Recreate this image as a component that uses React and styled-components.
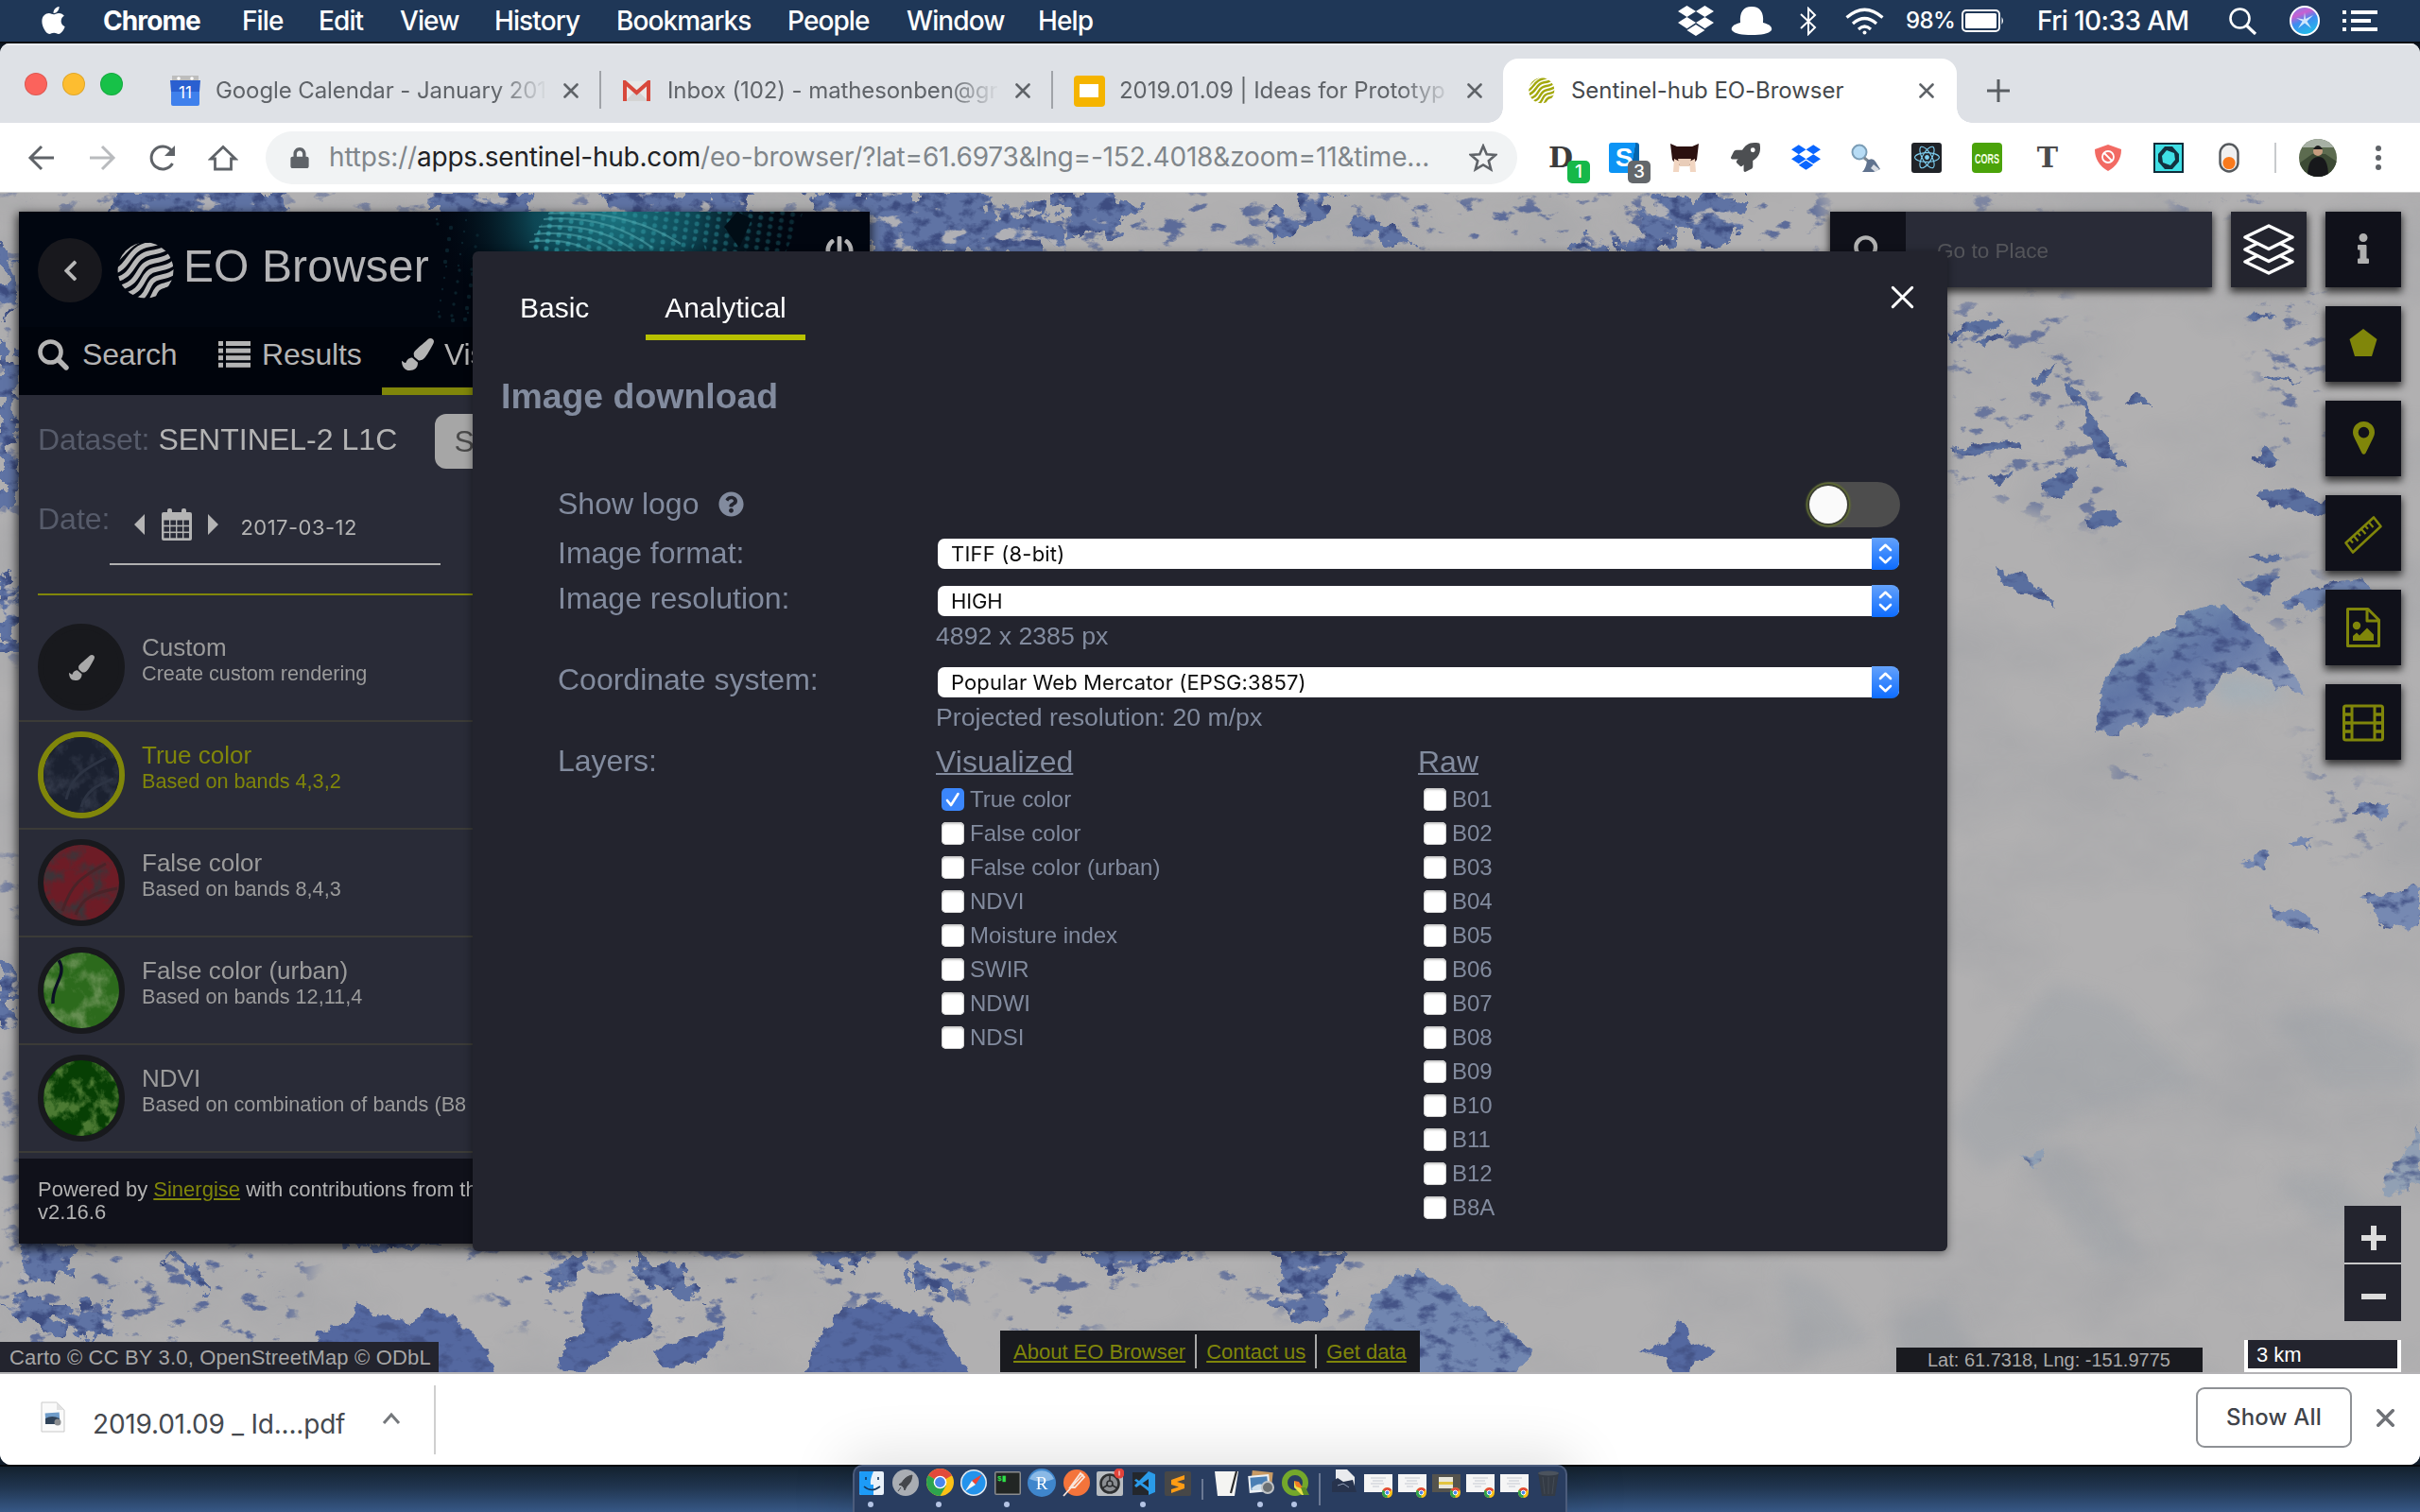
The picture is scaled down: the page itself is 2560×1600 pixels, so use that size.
import React from 'react';
import styled, { createGlobalStyle, css } from 'styled-components';
import {
  FaApple, FaDropbox, FaPaintBrush, FaQuestionCircle,
  FaInfo, FaRocket, FaLock, FaPowerOff, FaChevronLeft, FaReact,
} from 'react-icons/fa';

const ui = `Inter, Roboto, sans-serif`;
const arial = `"Liberation Sans", Arial, sans-serif`;
const olive = '#80860a';

const Global = createGlobalStyle`
  *, *::before, *::after { box-sizing: border-box; }
  html, body { margin: 0; padding: 0; }
  body { width: 2560px; height: 1600px; overflow: hidden; background: #1f3757; }
  svg { display: block; flex: none; }
  filter { color-interpolation-filters: sRGB; }
`;

const Desktop = styled.div`
  width: 2560px; height: 1600px; display: flex; flex-direction: column;
  font-family: ${ui}; overflow: hidden;
`;

/* ---------- menu bar ---------- */
const MenuBar = styled.header`
  height: 46px; flex: none; display: flex; align-items: center; padding: 0 45px 0 40px;
  background: #1f3757; border-bottom: 2px solid #060b12; color: #fff;
  font-size: 28px; line-height: 44px;
`;
const MenuItem = styled.span`
  width: ${p => p.$w}px; flex: none; white-space: nowrap;
  letter-spacing: ${p => p.$ls ?? -0.9}px; font-weight: ${p => (p.$bold ? 700 : 500)};
`;
const AppleBox = styled.div`width: 69px; flex: none; padding-bottom: 2px;`;
const Status = styled.div`margin-left: auto; display: flex; align-items: center;`;
const Slot = styled.div`width: ${p => p.$w}px; flex: none; display: flex; align-items: center;`;
const Percent = styled.span`
  width: 59px; font-size: 24px; letter-spacing: -0.6px; font-weight: 500; white-space: nowrap;
`;
const Clock = styled.span`width: 203px; letter-spacing: -0.6px; font-weight: 500; white-space: nowrap;`;

/* ---------- browser window ---------- */
const Window = styled.main`
  height: 1504px; flex: none; display: flex; flex-direction: column; overflow: hidden;
  border-radius: 10px 10px 12px 12px; background: #fff;
`;
const WindowBack = styled.div`
  flex: none; background: linear-gradient(#0b1420 0 60px, #16273c 1400px, #101c29);
`;
const TabStrip = styled.nav`
  height: 84px; flex: none; background: #dee1e6; border-top: 2px solid #eceef1;
  display: flex; align-items: flex-end; padding-left: 26px;
`;
const Lights = styled.div`display: flex; gap: 16px; width: 138px; height: 82px; align-items: center;`;
const Light = styled.i`width: 24px; height: 24px; border-radius: 50%; background: ${p => p.$c}; box-shadow: inset 0 0 0 1px rgba(0,0,0,.12);`;
const Tab = styled.div`
  position: relative; height: 68px; width: ${p => p.$w}px; flex: none; display: flex; align-items: center;
  padding: 0 ${p => p.$pr ?? 23}px 0 ${p => p.$pl ?? 23}px; font-size: 24px; color: #5f6368;
  ${p => p.$line && css`&::after { content: ''; position: absolute; right: 0; top: 13px; width: 2px; height: 40px; background: #a0a3a8; }`}
  ${p => p.$active && css`
    background: #fff; border-radius: 16px 16px 0 0; color: #45494d;
    &::before, &::after { content: ''; position: absolute; bottom: 0; width: 16px; height: 16px; }
    &::before { left: -16px; background: radial-gradient(circle at 0 0, transparent 15.5px, #fff 16px); }
    &::after { right: -16px; background: radial-gradient(circle at 100% 0, transparent 15.5px, #fff 16px); }
  `}
`;
const Favicon = styled.span`width: ${p => p.$w ?? 48}px; flex: none; display: flex;`;
const TabTitle = styled.span`
  width: ${p => p.$w}px; margin-right: auto; flex: none; white-space: nowrap; letter-spacing: ${p => p.$ls ?? -0.1}px;
  line-height: 40px;
  ${p => p.$fade && css`-webkit-mask-image: linear-gradient(90deg, #000 84%, transparent);`}
`;
const Toolbar = styled.div`
  height: 74px; flex: none; background: #fff; border-bottom: 1px solid #d0d0d0; display: flex; align-items: center; padding: 0 33px 0 28px;
`;
const NavIcons = styled.div`display: flex; gap: 32px; width: 253px; color: #5f6368;`;
const Omnibox = styled.div`
  width: 1324px; height: 56px; flex: none; border-radius: 28px; background: #f1f3f4; display: flex; align-items: center;
  padding: 0 20px 0 25px; color: #5f6368;
`;
const Url = styled.span`
  margin-left: 20px; width: 1206px; flex: none; font-size: 28px; letter-spacing: -0.17px; white-space: nowrap; color: #80868b; padding-bottom: 1px;
  b { font-weight: 400; color: #202124; letter-spacing: -0.22px; }
`;
const Extensions = styled.div`display: flex; margin-left: 17px;`;
const Ext = styled.div`position: relative; width: 64px; height: 40px; display: flex; align-items: center; justify-content: center;`;
const ExtBadge = styled.span`
  position: absolute; left: 36px; top: 23px; width: 24px; height: 24px; border-radius: 5px; background: ${p => p.$c}; color: #fff;
  font-size: 19px; line-height: 24px; text-align: center; font-weight: 500;
`;
const ExtTile = styled.span`
  width: 32px; height: 32px; border-radius: ${p => p.$r ?? 3}px; background: ${p => p.$bg ?? 'transparent'}; color: ${p => p.$fg ?? '#fff'};
  display: flex; align-items: center; justify-content: ${p => p.$align ?? 'center'}; font: 700 ${p => p.$fs ?? 28}px/32px ${p => p.$ff ?? arial};
`;
const ToolbarRule = styled.i`width: 2px; height: 32px; background: #c8cacd; margin: 0 24px 0 16px; align-self: center;`;
const Dots = styled.div`margin-left: 40px;`;

/* ---------- page ---------- */
const Page = styled.section`
  position: relative; height: 1250px; flex: none; overflow: hidden; background: #b0b0b2; font-family: ${arial};
`;
const MapCanvas = styled.svg`position: absolute; inset: 0;`;

const Panel = styled.aside`
  position: absolute; left: 20px; top: 20px; width: 900px; height: 1092px; background: #292b37; box-shadow: 0 4px 10px 2px rgba(0,0,0,.7);
  display: flex; flex-direction: column; color: #a9a9a9;
`;
const PanelHead = styled.div`
  position: relative; height: 122px; flex: none; background: #010610; display: flex; align-items: flex-start; padding: 28px 20px 0;
`;
const HeadArt = styled.svg`position: absolute; inset: 0;`;
const BackButton = styled.div`
  position: relative; width: 68px; height: 68px; border-radius: 50%; background: #18181d; color: #b9b9b9; display: flex; align-items: center; justify-content: center;
`;
const Brand = styled.div`
  position: relative; display: flex; margin: 4px 0 0 16px; gap: 10px; font-size: 48px; line-height: 52px; color: #b4b4b6; white-space: nowrap; letter-spacing: .1px;
`;
const Power = styled.div`position: relative; margin: -2px -3px 0 auto; color: #b4b4b6;`;
const PanelTabs = styled.div`height: 72px; flex: none; background: #00040c; display: flex; padding-left: 20px; font-size: 32px; color: #b4b4b4;`;
const PanelTab = styled.div`
  height: 72px; width: ${p => p.$w}px; flex: none; display: flex; align-items: center; padding: 0 0 6px ${p => p.$pl ?? 0}px; gap: ${p => p.$gap ?? 12}px;
  border-bottom: 8px solid ${p => (p.$active ? olive : 'transparent')}; white-space: nowrap; letter-spacing: -.15px;
`;
const DatasetRow = styled.div`
  margin: 20px 0 0 20px; height: 58px; flex: none; display: flex; font-size: 32px; line-height: 54px; letter-spacing: -0.1px; color: #565b6a; white-space: nowrap;
  strong { font-weight: 400; color: #b4b4b4; margin-left: 9px; width: 293px; letter-spacing: 0.03px; }
`;
const GrayButton = styled.div`
  width: 200px; height: 58px; border-radius: 12px; background: #a6a6a6; color: #4a4a4a; padding-left: 20px; font-size: 32px; line-height: 58px;
`;
const DateRow = styled.div`
  margin: 24px 0 30px 20px; height: 78px; flex: none; display: flex; font-size: 32px; line-height: 58px; color: #565b6a;
`;
const DateField = styled.div`
  width: 350px; height: 78px; border-bottom: 2px solid #b0b0b0; display: flex; align-items: center; padding: 0 0 6px 26px; color: #b4b4b4;
  font: 400 22px/30px ${ui};
`;
const DateText = styled.span`margin: 5px 0 0 20px; letter-spacing: 0.45px;`;
const LayerList = styled.ul`
  list-style: none; margin: 0; padding: 22px 0 0; height: 598px; flex: none; position: relative;
  &::before { content: ''; position: absolute; left: 20px; right: 20px; top: 0; height: 2px; background: ${olive}; }
`;
const LayerItem = styled.li`
  height: 114px; border-bottom: 2px solid #3b3b37; display: flex; padding: 10px 20px; color: ${p => (p.$on ? '#80860a' : '#9b9b9b')};
`;
const Thumb = styled.div`
  width: 92px; height: 92px; border-radius: 50%; flex: none; border: 6px solid ${p => (p.$on ? olive : '#18191d')}; background: #18191d;
  overflow: hidden; display: flex; align-items: center; justify-content: center; color: #a9a9a9;
`;
const LayerText = styled.div`
  margin: 9px 0 0 18px; white-space: nowrap; font-size: 26px; line-height: 32px;
  small { display: block; font-size: 21.67px; line-height: 24px; }
`;
const PanelFoot = styled.div`
  flex: 1; background: #10111a; color: #b2b2b2; padding: 21px 20px 0; font-size: 22px; line-height: 24px; white-space: nowrap;
  u { color: ${olive}; }
`;

const SearchBox = styled.div`
  position: absolute; left: 1936px; top: 20px; width: 404px; height: 80px; background: #292b37; display: flex; box-shadow: 0 4px 8px 1px rgba(0,0,0,.7);
  font-size: 22.6px; line-height: 84px; color: #54555a;
`;
const SearchIcon = styled.div`width: 80px; height: 80px; background: #10111a; color: #b2b2b2; padding: 25px 0 0 25px; margin-right: 33px;`;
const LayersButton = styled.div`
  position: absolute; left: 2360px; top: 20px; width: 80px; height: 80px; background: #23242e; box-shadow: 0 4px 8px 1px rgba(0,0,0,.7);
  display: flex; align-items: center; justify-content: center;
`;
const ToolColumn = styled.div`position: absolute; left: 2460px; top: 20px; display: flex; flex-direction: column; gap: 20px;`;
const Tool = styled.div`
  width: 80px; height: 80px; background: #10111a; box-shadow: 0 4px 8px 1px rgba(0,0,0,.7); color: ${p => p.$c ?? olive};
  display: flex; align-items: center; justify-content: center; padding: ${p => p.$pt ?? 0}px 0 ${p => p.$pb ?? 0}px;
`;
const ZoomColumn = styled.div`
  position: absolute; left: 2480px; top: 1072px; display: flex; flex-direction: column; gap: 2px; background: #c9c9c9;
`;
const ZoomButton = styled.div`width: 60px; height: 60px; background: #23242e; display: flex; align-items: center; justify-content: center; padding: 8px 0 0 2px;`;
const ScaleBar = styled.div`
  position: absolute; left: 2374px; top: 1214px; width: 166px; height: 34px; background: #23242e; border: 4px solid #fff; border-top: 0; color: #fff;
  font-size: 22px; line-height: 32px; padding-left: 9px;
`;
const Coords = styled.div`
  position: absolute; left: 2006px; top: 1222px; width: 324px; height: 26px; background: #191a1f; color: #a9a9a9; font-size: 20px; line-height: 26px; padding-left: 33px; white-space: nowrap;
`;
const Attribution = styled.div`
  position: absolute; left: 0; top: 1216px; width: 464px; height: 32px; background: #23242e; color: #a6a6a6; font-size: 22px; line-height: 33px; padding-left: 10px; white-space: nowrap;
  letter-spacing: .17px;
`;
const Links = styled.div`
  position: absolute; left: 1058px; top: 1204px; width: 444px; height: 44px; background: #191a1f; display: flex; align-items: center; padding-left: 14px; color: ${olive};
  font-size: 22px; line-height: 46px; white-space: nowrap;
  u { padding-top: 1px; }
`;
const LinkRule = styled.i`width: 2px; height: 36px; background: #a9a9a9; margin: 0 10px;`;
const PageEdge = styled.div`position: absolute; left: 0; right: 0; bottom: 0; height: 2px; background: #b4b3b6;`;

/* ---------- modal ---------- */
const Modal = styled.div`
  position: absolute; left: 500px; top: 62px; width: 1560px; height: 1058px; border-radius: 6px; background: #23242e; box-shadow: 0 2px 10px rgba(0,0,0,.45);
  padding: 30px 50px 0 30px; color: #828b9e;
`;
const ModalTabs = styled.div`display: flex; gap: 40px; height: 64px; color: #fff; font-size: 30px; line-height: 59px;`;
const ModalTab = styled.div`height: 64px; padding: 0 20px; border-bottom: 6px solid ${p => (p.$active ? '#b8c100' : 'transparent')};`;
const CloseBox = styled.div`margin: 6px -15px 0 auto;`;
const Title = styled.h3`margin: 37px 0 67px; font-size: 37.44px; line-height: 44px; font-weight: 700;`;
const Field = styled.div`
  display: grid; grid-template-columns: 400px 1fr; height: ${p => p.$h}px; padding-left: 60px; font-size: 32px;
`;
const Label = styled.div`line-height: ${p => p.$lh}px; display: flex; align-items: center; height: ${p => p.$lh}px; gap: 21px; white-space: nowrap;`;
const Control = styled.div`padding-top: 10px;`;
const Select = styled.div`
  margin: 0 1px 0 2px; height: 32px; border-radius: 7px; background: #fff; color: #0c0c0c; display: flex; justify-content: space-between; align-items: center; padding-left: 14px;
  font: 400 22px/32px ${ui}; letter-spacing: ${p => p.$ls ?? 0.1}px; white-space: nowrap;
`;
const Stepper = styled.div`
  width: 29px; height: 34px; border-radius: 0 8px 8px 0; background: linear-gradient(#64a2fb, #0d6cff); display: flex; align-items: center; justify-content: center;
`;
const Hint = styled.div`font-size: 26.67px; line-height: 42px;`;
const Toggle = styled.div`
  width: 99px; height: 48px; border-radius: 24px; background: #4d4d4d; margin: 2px 0 0 auto; padding: 4px 3px;
`;
const Knob = styled.div`width: 40px; height: 40px; border-radius: 50%; background: #fafafa; box-shadow: 0 0 0 2px #3c3f33, 0 0 2px 3.5px #63722f;`;
const Columns = styled.div`display: grid; grid-template-columns: 510px 1fr;`;
const ColumnTitle = styled.div`height: 46px; line-height: 49px; text-decoration: underline; text-decoration-thickness: 2px;`;
const CheckRow = styled.div`height: 36px; display: flex; align-items: center; gap: 6px; padding-left: 6px; font-size: 24px; line-height: 36px; white-space: nowrap;`;
const Box = styled.span`
  width: 24px; height: 24px; border-radius: 5px; display: flex; align-items: center; justify-content: center;
  background: ${p => (p.$on ? '#3b86fb' : '#fff')}; box-shadow: ${p => (p.$on ? 'none' : 'inset 0 2px 2px #c9c9c9, inset 0 0 0 1px #d5d5d5')};
`;

/* ---------- downloads ---------- */
const Downloads = styled.footer`height: 96px; flex: none; background: #fff; display: flex; align-items: flex-start; padding: 0 27px 0 43px; color: #45494f;`;
const FileIcon = styled.div`margin: 29px 29px 0 0;`;
const FileName = styled.span`margin-top: 33px; width: 306px; flex: none; font-size: 28px; line-height: 40px; letter-spacing: -0.2px; white-space: nowrap;`;
const ChevronBox = styled.div`width: 55px; margin-top: 40px;`;
const BarRule = styled.i`width: 2px; height: 73px; margin-top: 12px; background: #cfcfcf;`;
const ShowAll = styled.div`
  margin: 14px 26px 0 auto; width: 165px; height: 64px; border: 2px solid #8e9195; border-radius: 9px; text-align: center; font: 500 24px/60px ${ui}; letter-spacing: .2px; color: #3f434a;
`;
const CloseSmall = styled.div`margin-top: 37px;`;

/* ---------- dock ---------- */
const DockArea = styled.div`
  flex: 1; display: flex; justify-content: center; border-top: 2px solid #05090e;
  background: linear-gradient(#13212e, #20354f 40%, #3c6093);
`;
const Dock = styled.div`
  position: relative; z-index: 2; width: 756px; height: 56px; flex: none; margin-top: -2px; border-radius: 10px 10px 0 0; background: #293d60; border: 2px solid #4c5c7b; border-bottom: 0;
  box-shadow: 0 0 60px 10px rgba(0,0,0,.12); display: flex;
`;
const DockItem = styled.div`
  width: 36px; height: 50px; flex: none; display: flex; flex-direction: column; align-items: center; padding-top: 2px; position: relative;
  ${p => p.$run && css`&::after { content: ''; position: absolute; left: 14px; top: 37px; width: 6px; height: 6px; border-radius: 50%; background: #b4c4e4; }`}
`;
const DockRule = styled.i`width: 2px; height: ${p => p.$h}px; margin: ${p => p.$t}px 7px 0; flex: none; background: #6a7893;`;

/* ---------- drawings ---------- */
const Cross = ({ s = 16, w = 2.6, c = '#5f6368' }) => (
  <svg width={s} height={s} viewBox="0 0 16 16" stroke={c} strokeWidth={w} strokeLinecap="round"><path d="M1.5 1.5 14.5 14.5M14.5 1.5 1.5 14.5" /></svg>
);

const Magnifier = ({ s = 33 }) => (
  <svg width={s} height={s} viewBox="0 0 33 33" fill="none" stroke="currentColor" strokeWidth="4.6">
    <circle cx="13.5" cy="13.5" r="11" /><path d="M21.5 21.5 30 30" strokeWidth="5.4" strokeLinecap="round" />
  </svg>
);

const Globe = ({ s, c }) => (
  <svg width={s} height={s} viewBox="0 0 60 60">
    <defs><clipPath id={'g' + Math.round(s)}><circle cx="30" cy="30" r="29.5" /></clipPath></defs>
    <g clipPath={`url(#g${Math.round(s)})`}>
      <g fill="none" stroke={c} strokeWidth="5.2" transform="rotate(-8 30 30)">
        <path d="M-6 18C8 14 14 -2 36 -4" />
        <path d="M-6 27C14 26 14 4 38 3.5 48 3 52 2 60 -4" />
        <path d="M-6 36C20 35 16 13 38 12.5 52 12 56 10 64 4" />
        <path d="M-4 45C26 44 19 22 40 21.500 54 21 58 19 66 12" />
        <path d="M0 53.500C30 53 22 31 42 30.500 56 30 60 28 68 20" />
        <path d="M8 61C34 61 26 40 44 39.500 56 39 60 37 68 30" />
        <path d="M20 67C38 66 32 49 48 48.500 56 48 60 46 66 40" />
      </g>
    </g>
  </svg>
);

const Dropbox = ({ s, c }) => <FaDropbox size={s} color={c} />;

const MapArt = () => (
  <MapCanvas width="2560" height="1250" viewBox="0 204 2560 1250">
    <defs>
      <filter id="grain" x="0" y="0" width="100%" height="100%">
        <feTurbulence type="fractalNoise" baseFrequency="0.006 0.009" numOctaves="5" seed="8" />
        <feColorMatrix values="0 0 0 0 .6  0 0 0 0 .61  0 0 0 0 .63  0 0 0 2.2 -0.85" />
      </filter>
      <filter id="rough" x="-10%" y="-10%" width="120%" height="120%">
        <feTurbulence type="fractalNoise" baseFrequency="0.05" numOctaves="5" seed="3" result="n" />
        <feDisplacementMap in="SourceGraphic" in2="n" scale="44" xChannelSelector="R" yChannelSelector="G" result="d" />
        <feTurbulence type="fractalNoise" baseFrequency="0.06 0.08" numOctaves="5" seed="21" />
        <feColorMatrix values="0 0 0 0 .24  0 0 0 0 .3  0 0 0 0 .5  0 0 0 4 -1.9" />
        <feComposite in2="d" operator="in" result="dark" />
        <feTurbulence type="fractalNoise" baseFrequency="0.03 0.05" numOctaves="6" seed="40" />
        <feColorMatrix values="0 0 0 0 .69  0 0 0 0 .69  0 0 0 0 .71  0 12 0 0 -7.5" />
        <feComposite in2="d" operator="in" result="snow" />
        <feMerge><feMergeNode in="d" /><feMergeNode in="dark" /><feMergeNode in="snow" /></feMerge>
      </filter>
      <filter id="ridge" x="-10%" y="-10%" width="120%" height="120%">
        <feTurbulence type="fractalNoise" baseFrequency="0.07" numOctaves="4" seed="5" result="n" />
        <feDisplacementMap in="SourceGraphic" in2="n" scale="16" xChannelSelector="R" yChannelSelector="G" result="d" />
        <feTurbulence type="fractalNoise" baseFrequency="0.05 0.08" numOctaves="5" seed="29" />
        <feColorMatrix values="0 0 0 0 .27  0 0 0 0 .33  0 0 0 0 .53  0 0 0 4 -2" />
        <feComposite in2="d" operator="in" result="dark" />
        <feMerge><feMergeNode in="d" /><feMergeNode in="dark" /></feMerge>
      </filter>
      <filter id="speck" x="-10%" y="-10%" width="120%" height="120%">
        <feTurbulence type="fractalNoise" baseFrequency="0.035 0.06" numOctaves="6" seed="12" />
        <feColorMatrix values="0 0 0 0 .36  0 0 0 0 .42  0 0 0 0 .6  10 0 0 0 -6.2" result="t" />
        <feGaussianBlur in="SourceGraphic" stdDeviation="10" result="b" />
        <feComposite in="t" in2="b" operator="in" />
      </filter>
      <filter id="soft"><feGaussianBlur stdDeviation="9" /></filter>
      <linearGradient id="peak" gradientUnits="userSpaceOnUse" x1="2270" y1="650" x2="2340" y2="770">
        <stop offset="0" stopColor="#7892b3" /><stop offset=".45" stopColor="#6075a5" /><stop offset="1" stopColor="#8494b6" />
      </linearGradient>
    </defs>
    <rect y="204" width="2560" height="1250" fill="#b1b0b1" />
    <g fill="#a1a5aa" opacity=".6" filter="url(#soft)">
      <path d="M2060 1190 2170 1040 2240 1060 2330 1150 2200 1180 2100 1240zM2400 1075 2470 1065 2560 1110V1150L2460 1150zM2400 1245 2470 1240 2520 1290 2460 1300z" />
      <path d="M2130 1210 2190 1215 2270 1330 2220 1340zM2000 1400 2060 1370 2090 1440 2010 1450zM1880 1340 1930 1360 1980 1420 1900 1440z" />
      <path fill="#9db0bd" d="M2340 714 2400 720 2420 740 2350 745z" />
    </g>
    <rect y="204" width="2560" height="1250" filter="url(#grain)" opacity=".4" />
    <g fill="#000" filter="url(#speck)">
      <path d="M0 204H130V224H0zM300 204H920V224H300zM920 204H1340V266H920zM1360 204 1930 204V266H1500L1400 240z" />
      <path d="M0 204H20V700H0zM0 900H20V1320H0z" />
      <path d="M0 1316H330L300 1452H60L0 1410zM470 1316 640 1316 620 1400 540 1400zM640 1316H800V1420H700zM850 1316H1060L1020 1400 880 1380zM1090 1316 1220 1330 1160 1400 1100 1452 1060 1400zM1260 1316H1440V1400L1300 1370z" />
    </g>
    <g fill="#000" filter="url(#speck)" opacity=".85">
      <path d="M2060 320 2180 310 2220 400 2240 560 2150 540 2060 510zM2370 320 2460 300V480L2400 490 2400 420zM2390 590 2450 600V670L2380 650zM2070 204H2180V224H2070zM2300 204H2420V224H2300z" />
      <path d="M2240 780 2290 800 2270 850 2230 840zM2430 740 2470 820 2540 850V900L2460 900z" opacity=".7" />
    </g>
    <g fill="#5f73a4" filter="url(#rough)">
      <path d="M125 200H312L300 232 110 236zM450 200H565L550 240H470zM640 200H805L790 240H660zM855 200H930V240H870z" />
      <path d="M915 200H1025L1050 226 1110 214 1130 262 1080 270H920zM1120 200H1175L1210 222 1170 250 1130 246z" />
      <path d="M1335 235 1375 222 1390 204 1420 208 1380 240 1345 262zM1425 240 1440 226 1480 240 1500 262 1440 250zM1655 266 1680 246 1700 266zM1712 270 1735 235 1755 204 1850 204 1840 250 1810 270 1780 240 1750 270z" />
      <path d="M0 250 14 262 16 320 0 340zM0 350 18 380 16 530 0 540zM0 610 20 620 18 690 0 690zM0 1010 18 1030 16 1090 0 1090z" />
      <path d="M22 1312H80L72 1340 54 1360 30 1346zM0 1378 40 1372 60 1386 118 1380 120 1410 96 1420 70 1404 20 1398z" />
      <path d="M180 1326 210 1344 226 1366 200 1362zM670 1324 720 1340 740 1374 700 1368 670 1344zM570 1350 620 1324 612 1350 590 1366z" />
      <path d="M350 1312H470L440 1322 380 1320zM865 1316H935L920 1336 880 1340zM1140 1316H1262L1230 1340 1160 1336zM960 1340 1020 1350 1010 1370 960 1360z" />
      <path d="M1340 1316H1420L1410 1350 1402 1390 1370 1400 1340 1380 1356 1350z" />
    </g>
    <g filter="url(#ridge)">
      <path fill="#5a6f9f" d="M2060 356 2080 340 2100 338 2122 340 2104 350 2076 354 2060 362zM2090 362 2124 350 2100 368zM2180 400 2198 412 2214 440 2236 478 2246 492 2226 484 2206 462 2204 432 2184 412zM2150 402 2178 386 2160 406zM2160 512 2198 492 2190 520 2170 526zM2102 506 2130 498 2116 516zM2060 474 2130 466 2140 474 2084 480zM2246 424 2264 416 2276 428 2258 428z" />
      <path fill="#5a6f9f" d="M2110 600 2146 612 2178 644 2150 632 2120 618zM2204 550 2230 538 2244 552 2214 560zM2386 522 2430 518 2462 534V548L2400 532zM2382 486 2394 472 2412 488 2396 492zM2378 590 2410 586 2420 592 2388 596zM2370 614 2408 610 2400 632 2380 624zM2390 396 2440 404 2400 402zM2376 332 2404 334 2384 340z" />
      <path fill="#5468a0" d="M335 1460 338 1408 370 1398 378 1376 396 1390 430 1400 456 1384 490 1402 515 1428 532 1460zM850 1460 862 1420 888 1388 928 1372 960 1390 986 1388 1002 1420 1030 1460z" />
      <path fill="#5468a0" d="M620 1366 655 1370 690 1385 685 1415 650 1425 620 1450 590 1448 600 1420 616 1410zM690 1430 740 1410 770 1408 745 1436 700 1450zM1776 1398 1790 1420 1816 1430 1792 1440 1788 1456 1772 1456 1764 1438 1735 1430 1762 1422z" />
      <path fill="url(#peak)" d="M2217 772 2222 730 2242 694 2290 668 2320 646 2350 638 2380 662 2416 696 2438 734 2410 726 2370 704 2350 716 2330 748 2280 758 2240 776z" />
      <path fill="#7186b0" d="M1500 1342 1532 1362 1562 1382 1602 1410 1622 1428 1600 1460H1484L1444 1412 1452 1372 1482 1352zM2414 640 2440 622 2500 612 2510 622 2450 644z" />
      <path fill="#7689b2" d="M2500 846 2530 850 2520 866 2490 860zM2420 890 2450 886 2440 900zM2496 950 2560 940V984L2520 980 2510 960zM2370 914 2400 900 2394 920zM2400 958 2440 966 2450 984 2410 974z" />
      <path fill="#8a9cb5" opacity=".8" d="M2520 1250 2560 1190V1250L2530 1266zM2136 1222 2160 1218 2156 1236z" />
    </g>
  </MapCanvas>
);

const HeaderArt = () => (
  <HeadArt width="900" height="122" viewBox="20 224 900 122">
    <defs>
      <radialGradient id="glow" gradientUnits="userSpaceOnUse" cx="650" cy="226" r="190" gradientTransform="translate(0 60) scale(1 .74)">
        <stop offset="0" stopColor="#1b7480" /><stop offset=".45" stopColor="#0d4654" /><stop offset="1" stopColor="#010a14" stopOpacity="0" />
      </radialGradient>
      <pattern id="dots" width="11" height="8" patternUnits="userSpaceOnUse" patternTransform="rotate(8)"><circle cx="4" cy="4" r="2.5" fill="#2a8a95" /></pattern>
      <linearGradient id="fade" gradientUnits="userSpaceOnUse" x1="560" x2="860" y1="0" y2="0">
        <stop offset="0" stopColor="#fff" /><stop offset=".5" stopColor="#aaa" /><stop offset="1" stopColor="#333" />
      </linearGradient>
      <mask id="m"><path fill="url(#fade)" d="M580 224H850L830 270H748L740 246 730 270 700 290H545z" /></mask>
    </defs>
    <rect x="440" y="224" width="480" height="122" fill="url(#glow)" />
    <rect x="500" y="224" width="400" height="60" fill="url(#dots)" mask="url(#m)" />
    <g fill="none" stroke="#58aeb3" strokeWidth="2.2" opacity=".5">
      <path d="M575 232Q640 226 690 262M570 240Q630 234 672 266M565 248Q620 242 656 270M560 256Q606 250 634 272M580 226Q660 220 720 258" />
    </g>
    <g fill="#0e2b36" opacity=".7">
      {Array.from({ length: 34 }, (_, i) => <circle key={i} cx={462 + ((i * 37) % 44)} cy={232 + ((i * 53) % 110)} r={1.2 + (i % 3) * 0.5} />)}
    </g>
    <path d="M780 224 795 232 782 262 766 240z" fill="#010d16" />
  </HeadArt>
);

const thumbs = {
  true: { bg: '#1b2130', f: '.3 .33 .4', k: 1.5 },
  false: { bg: '#6d1c26', f: '.24 .2 .22', k: 3 },
  urban: { bg: '#2c6a1c', f: '.4 .56 .32', k: 3 },
  ndvi: { bg: '#073f04', f: '.3 .48 .2', k: 5 },
};
const ThumbArt = ({ kind }) => {
  const t = thumbs[kind];
  const [r, g, b] = t.f.split(' ');
  return (
    <svg width="80" height="80" viewBox="0 0 80 80">
      <filter id={'t' + kind} x="0" y="0" width="100%" height="100%">
        <feTurbulence type="fractalNoise" baseFrequency="0.06 0.05" numOctaves="5" seed={kind.length * 7} />
        <feColorMatrix values={`0 0 0 0 ${r} 0 0 0 0 ${g} 0 0 0 0 ${b} 0 0 0 ${t.k} ${-t.k * 0.46}`} />
      </filter>
      <rect width="80" height="80" fill={t.bg} />
      <rect width="80" height="80" filter={`url(#t${kind})`} />
      {kind === 'urban' && <path d="M16 8C26 24 8 34 10 54" fill="none" stroke="#0b1024" strokeWidth="3.4" />}
      {kind === 'false' && <path d="M20 70C30 40 40 34 66 20M34 74C42 52 60 50 78 46" fill="none" stroke="#4a2328" strokeWidth="3" />}
      {kind === 'true' && <path d="M24 66C30 40 44 34 66 22M40 74C46 54 60 50 74 44" fill="none" stroke="#2d3444" strokeWidth="3" />}
    </svg>
  );
};

const PinIcon = () => (
  <svg width="23" height="35" viewBox="0 0 23 35" fill="currentColor" fillRule="evenodd">
    <path d="M11.5 0A11.5 11.5 0 0 1 23 11.5C23 14 22 16 21 18.2L13.5 33.5Q11.5 36 9.5 33.5L2 18.2C1 16 0 14 0 11.5A11.5 11.5 0 0 1 11.5 0zM11.5 5.8A5.8 5.8 0 1 0 11.5 17.4 5.8 5.8 0 1 0 11.5 5.8z" />
  </svg>
);
const RulerIcon = () => (
  <svg width="42" height="42" viewBox="0 0 42 42" fill="none" stroke="currentColor" strokeWidth="2.6" strokeLinejoin="round">
    <path d="M2.5 29.5 32 2.5 39.5 12 10 39.5z" />
    <path d="M7 26 10 29.5M11 22.3 15.5 27.5M15 18.7 18 22M19 15 23.5 20M23 11.4 26 14.7M27 7.8 31.5 13" strokeWidth="2.2" />
  </svg>
);
const ImageFileIcon = () => (
  <svg width="36" height="42" viewBox="0 0 36 42" fill="none" stroke="currentColor" strokeWidth="3" strokeLinejoin="round">
    <path d="M1.5 1.5H23L34.5 13V40.5H1.5zM22 2V14H34" />
    <circle cx="11" cy="19" r="4.2" fill="currentColor" stroke="none" />
    <path d="M7 35V30L11 26.5 14 29.5 22 21.5 29 28.5V35z" fill="currentColor" stroke="none" />
  </svg>
);
const FilmIcon = () => (
  <svg width="44" height="40" viewBox="0 0 44 40" fill="none" stroke="currentColor" strokeWidth="3">
    <rect x="1.5" y="2" width="41" height="36" rx="2" />
    <path d="M10 2V38M34 2V38M10 20H34" />
    <path d="M1 11H10M1 20H10M1 29H10M34 11H43M34 20H43M34 29H43" strokeWidth="3.4" />
  </svg>
);
const LayersIcon = () => (
  <svg width="54" height="54" viewBox="0 0 54 54" fill="#23242e" stroke="#fff" strokeWidth="3.5" strokeLinejoin="round">
    <path d="M27 27.5 52 40 27 52 2 40z" /><path d="M27 14.5 52 27 27 39.5 2 27z" /><path d="M27 2 52 14 27 26.5 2 14z" />
  </svg>
);
const ListIcon = () => (
  <svg width="34" height="28" viewBox="0 0 34 28" fill="currentColor">
    {[0, 7.6, 15.2, 22.8].map(y => <g key={y}><rect y={y} width="5" height="5" /><rect x="8" y={y} width="26" height="5" /></g>)}
  </svg>
);
const CalendarIcon = () => (
  <svg width="32" height="34" viewBox="0 0 32 34" fill="#b4b4b4">
    <rect x="6" y="0" width="5" height="8" rx="2" /><rect x="21" y="0" width="5" height="8" rx="2" />
    <path d="M2 4H30Q32 4 32 6V32Q32 34 30 34H2Q0 34 0 32V6Q0 4 2 4z" />
    <g fill="#292b37">{[0, 1, 2].map(r => [0, 1, 2, 3].map(c => <rect key={`${r}${c}`} x={2.4 + c * 7} y={12.5 + r * 6.8} width="5.6" height="5.2" />))}</g>
  </svg>
);
const Chrome = ({ s = 28 }) => (
  <svg width={s} height={s} viewBox="0 0 28 28">
    <circle cx="14" cy="14" r="14" fill="#fbc116" /><path d="M14 14 1.9 7A14 14 0 0 1 26.1 7z" fill="#e2493b" /><path d="M14 14 1.9 7A14 14 0 0 0 14 28L20 17.5z" fill="#2da44e" />
    <circle cx="14" cy="14" r="6.6" fill="#fff" /><circle cx="14" cy="14" r="5.2" fill="#4a86ee" />
  </svg>
);
const DocThumb = ({ dark }) => (
  <svg width="32" height="32" viewBox="0 0 32 32">
    <rect x="1" y="6" width="30" height="19" fill={dark ? '#55544e' : '#f5f5f5'} />
    {dark
      ? <g><rect x="8" y="9" width="15" height="12" fill="#e8e6da" /><rect x="8" y="14" width="15" height="3" fill="#e2c541" /></g>
      : <path d="M8 10H24M10 13H21M8 16H22M10 19H17" stroke="#c6cad1" strokeWidth="1.2" />}
    <g transform="translate(20 20)"><circle cx="5.5" cy="5.5" r="5.5" fill="#fbc116" /><path d="M5.5 5.5.7 2.8A5.5 5.5 0 0 1 10.3 2.8z" fill="#e2493b" /><path d="M5.5 5.5.7 2.8A5.5 5.5 0 0 0 5.5 11z" fill="#2da44e" /><circle cx="5.5" cy="5.5" r="2.3" fill="#4a86ee" stroke="#fff" /></g>
  </svg>
);
const D = ({ children }) => <svg width="30" height="30" viewBox="0 0 30 30">{children}</svg>;

const dock = [
  { run: 1, a: <D><rect x="2" y="3" width="26" height="25" rx="2" fill="#e9f1f9" /><path d="M2 5Q2 3 4 3H17Q13 12 14 17H17V28H4Q2 28 2 26z" fill="#1d9bf7" /><path d="M9 9V12M22 9V12M7 19Q15 26 24 19" stroke="#14365c" strokeWidth="1.6" fill="none" /></D> },
  { a: <D><circle cx="15" cy="15" r="14" fill="#a9adb3" /><path d="M22 7Q15 8 11 15L8 17 11 18 13 20 14 23 16 19Q22 14 22 7zM10 20 7 24" fill="#44474c" stroke="#44474c" /></D> },
  { run: 1, a: <Chrome s={29} /> },
  { a: <D><circle cx="15" cy="15" r="14" fill="#e6ebf0" /><circle cx="15" cy="15" r="12.5" fill="#2393ec" /><path d="M24 6 17 17 13 13z" fill="#ee4433" /><path d="M6 24 13 13 17 17z" fill="#f3f3f3" /></D> },
  { run: 1, a: <D><rect x="1" y="3" width="28" height="25" rx="2" fill="#8b8d8f" /><rect x="2.5" y="4.5" width="25" height="22" fill="#222624" /><text x="4" y="13" fontSize="8" fontWeight="700" fill="#2fe24b" fontFamily="Liberation Mono">$▮</text></D> },
  { a: <D><circle cx="15" cy="15" r="15" fill="#3f86cc" /><path d="M2 11A14 14 0 0 1 28 11Q15 17 2 11z" fill="#8ab9e6" /><text x="15" y="21.5" fontSize="19" textAnchor="middle" fill="#fff" fontFamily="Liberation Serif">R</text></D> },
  { a: <D><circle cx="16" cy="15" r="14" fill="#f4743b" /><path d="M23 6 12 18 2 29M20 5 24 9 14 20 9 20z" stroke="#f8e6dc" strokeWidth="1.8" fill="none" /></D> },
  { a: <D><rect x="1" y="3" width="28" height="26" rx="2" fill="#b9bdc1" /><circle cx="15" cy="16" r="9.5" fill="#8b8e92" stroke="#2d2f31" strokeWidth="2.6" /><circle cx="15" cy="16" r="3" fill="none" stroke="#2d2f31" strokeWidth="1.6" /><path d="M15 7V13M7 21 12.5 17.5M23 21 17.5 17.5" stroke="#2d2f31" strokeWidth="1.6" /><circle cx="25" cy="5" r="5.5" fill="#e2433b" /><path d="M25 2.5V7.5" stroke="#fff" /></D> },
  { run: 1, a: <D><path d="M3 4H20L27 6V25L20 28H3z" fill="#23272d" /><path d="M20 3 27 6V25L20 28 20 20 7 11 5 12.5 15 20 20 24zM20 3 5 18 7 20 20 11z" fill="#2a9bea" /></D> },
  { a: <D><rect x="1" y="3" width="28" height="26" rx="2" fill="#474747" /><path d="M22 7 8 12V17L16 19.5 8 22V26L22 21V16.5L14 14 22 11.5z" fill="#ff9c14" /></D> },
  { rule: [22, 13] },
  { a: <D><path d="M2 3H27L23 29H5z" fill="#f4f4f2" /><path d="M25 3 19 26" stroke="#2c2c2c" strokeWidth="2.2" /></D> },
  { run: 1, a: <D><rect x="5" y="3" width="22" height="14" fill="#c79a64" transform="rotate(6 16 10)" /><rect x="2" y="7" width="22" height="18" fill="#eef2f5" transform="rotate(-5 13 16)" /><rect x="4" y="9" width="18" height="13" fill="#4a7fb4" transform="rotate(-5 13 16)" /><path d="M5 21Q12 13 23 19L22 22 6 23z" fill="#cfe0ec" /><circle cx="22" cy="20" r="6" fill="#6b7073" stroke="#bfc3c6" strokeWidth="2" /></D> },
  { run: 1, a: <D><circle cx="15" cy="15" r="11" fill="none" stroke="#74a82b" strokeWidth="6" /><path d="M14 13 29 28H22L14 20z" fill="#e7e34a" /><path d="M14 13 19 14 24 22 16 19z" fill="#ee7a25" /><path d="M21 20H26L30 28H24z" fill="#5d8d25" /></D> },
  { rule: [34, 7] },
  { a: <D><path d="M6 1H18L26 9V25H6z" fill="#e9ebee" /><path d="M2 14 8 10 14 14 24 12 28 25H2z" fill="#27334d" /><path d="M8 18 14 16 20 20" stroke="#8d9bb5" fill="none" /></D> },
  { a: <DocThumb /> }, { a: <DocThumb /> }, { a: <DocThumb dark /> }, { a: <DocThumb /> }, { a: <DocThumb /> },
  { a: <D><path d="M4 4H26L22 29H8z" fill="#343b45" /><ellipse cx="15" cy="5" rx="11" ry="2.5" fill="#4b535d" /><path d="M9 9 11 27M15 9V27M21 9 19 27" stroke="#444c56" /></D> },
];

const layers = [
  ['Custom', 'Create custom rendering', null],
  ['True color', 'Based on bands 4,3,2', 'true'],
  ['False color', 'Based on bands 8,4,3', 'false'],
  ['False color (urban)', 'Based on bands 12,11,4', 'urban'],
  ['NDVI', 'Based on combination of bands (B8 - B4)/(B8 + B4)', 'ndvi'],
];
const visualized = ['True color', 'False color', 'False color (urban)', 'NDVI', 'Moisture index', 'SWIR', 'NDWI', 'NDSI'];
const raw = ['B01', 'B02', 'B03', 'B04', 'B05', 'B06', 'B07', 'B08', 'B09', 'B10', 'B11', 'B12', 'B8A'];

const Check = ({ label, on }) => (
  <CheckRow>
    <Box $on={on}>{on && <svg width="16" height="18" viewBox="0 0 16 18" fill="none" stroke="#fff" strokeWidth="2.6" strokeLinecap="round" strokeLinejoin="round"><path d="M2 10 6 15 13.5 3" /></svg>}</Box>
    {label}
  </CheckRow>
);
const Dropdown = ({ value, ls }) => (
  <Select $ls={ls}>{value}
    <Stepper><svg width="15" height="22" viewBox="0 0 15 22" fill="none" stroke="#fff" strokeWidth="2.6" strokeLinecap="round" strokeLinejoin="round"><path d="M2 7 7.5 1.8 13 7M2 15 7.5 20.2 13 15" /></svg></Stepper>
  </Select>
);

function Menu() {
  return (
    <MenuBar>
      <AppleBox><FaApple size={33} /></AppleBox>
      <MenuItem $w={147} $bold $ls={-0.9}>Chrome</MenuItem>
      <MenuItem $w={81}>File</MenuItem>
      <MenuItem $w={86}>Edit</MenuItem>
      <MenuItem $w={100}>View</MenuItem>
      <MenuItem $w={129}>History</MenuItem>
      <MenuItem $w={181}>Bookmarks</MenuItem>
      <MenuItem $w={126}>People</MenuItem>
      <MenuItem $w={139}>Window</MenuItem>
      <MenuItem $w={80}>Help</MenuItem>
      <Status>
        <Slot $w={56}><Dropbox s={38} c="#fff" /></Slot>
        <Slot $w={71}><svg width="44" height="30" viewBox="0 0 44 30" fill="#fff"><path d="M22 0C31 0 35 6 34 17 42 19 44 22 43 25 40 29 32 30 22 30S4 29 1 25C0 22 2 19 10 17 9 6 13 0 22 0z" /></svg></Slot>
        <Slot $w={50}><svg width="22" height="31" viewBox="0 0 22 31" fill="none" stroke="#fff" strokeWidth="2"><path d="M3 8 18 22 11 29V2L18 9 3 23" /></svg></Slot>
        <Slot $w={64}><svg width="41" height="29" viewBox="0 0 41 29" fill="none" stroke="#fff" strokeWidth="3.2"><path d="M1.5 10.5Q20.5-6 39.5 10.5M8 17Q20.5 6 33 17M14 23Q20.5 17 27 23" /><circle cx="20.5" cy="26.5" r="2" fill="#fff" stroke="none" /></svg></Slot>
        <Percent>98%</Percent>
        <Slot $w={80}><svg width="46" height="24" viewBox="0 0 46 24"><rect x="1" y="1" width="39" height="22" rx="4" fill="none" stroke="#fff" strokeWidth="2" /><rect x="4" y="4" width="33" height="16" rx="1.5" fill="#fff" /><path d="M42.5 8Q45.5 12 42.5 16z" fill="#fff" /></svg></Slot>
        <Clock>Fri 10:33 AM</Clock>
        <Slot $w={64}><svg width="30" height="29" viewBox="0 0 30 29" fill="none" stroke="#fff" strokeWidth="2.6"><circle cx="11.5" cy="11.5" r="10" /><path d="M18.5 19 28 28" strokeWidth="3.2" /></svg></Slot>
        <Slot $w={56}><svg width="32" height="32" viewBox="0 0 32 32"><defs><linearGradient id="siri" x1="0" y1="0" x2=".4" y2="1"><stop offset="0" stopColor="#6e8bf0" /><stop offset=".35" stopColor="#c85fd0" /><stop offset=".6" stopColor="#3d8cf0" /><stop offset="1" stopColor="#25b7e8" /></linearGradient></defs><circle cx="16" cy="16" r="15" fill="url(#siri)" stroke="#fff" strokeWidth="2" /><path d="M16 7 17 14 25 10 18.5 16.5 23 24 16 18.5 9 24 13.5 16.5 7 13 15 14.5z" fill="#e9f6ff" opacity=".85" /></svg></Slot>
        <Slot $w={37}><svg width="37" height="22" viewBox="0 0 37 22" fill="#fff"><path d="M0 0H4V4H0zM9 0H37V4H9zM0 9H4V13H0zM9 9H30V13H9zM0 18H4V22H0zM9 18H37V22H9z" /></svg></Slot>
      </Status>
    </MenuBar>
  );
}

function Tabs() {
  return (
    <TabStrip>
      <Lights><Light $c="#fb635c" /><Light $c="#fdbd30" /><Light $c="#17c148" /></Lights>
      <Tab $w={472} $pl={16} $pr={24} $line>
        <Favicon><svg width="32" height="32" viewBox="0 0 32 32"><path d="M2 0H30V7H2z" fill="#bdbdbd" /><circle cx="9" cy="3" r="1.8" fill="#fff" /><circle cx="23" cy="3" r="1.8" fill="#fff" /><path d="M0 5H32L31 17H1z" fill="#2a5fd0" /><path d="M1 17H31V30Q31 32 29 32H3Q1 32 1 30z" fill="#3f80ec" /><text x="16" y="24" fontSize="17" textAnchor="middle" fill="#fff" fontFamily="Inter">11</text></svg></Favicon>
        <TabTitle $w={352} $fade>Google Calendar - January 201</TabTitle><Cross />
      </Tab>
      <Tab $w={478} $pr={24} $line>
        <Favicon $w={47}><svg width="29" height="22" viewBox="0 0 29 22"><path d="M2 1H27V22H2z" fill="#e8e8e8" /><path d="M2 22 14.5 10 27 22z" fill="#d4d4d4" /><path d="M2 22V2L14.5 13 27 2V22" fill="none" stroke="#d8483b" strokeWidth="4" /></svg></Favicon>
        <TabTitle $w={352} $fade>Inbox (102) - mathesonben@gr</TabTitle><Cross />
      </Tab>
      <Tab $w={476} $pl={22} $pr={22}>
        <Favicon><svg width="33" height="33" viewBox="0 0 33 33"><rect width="33" height="33" rx="4" fill="#f5b400" /><rect x="6" y="9" width="20" height="14" fill="#fff" /></svg></Favicon>
        <TabTitle $w={354} $fade $ls={-0.05}>2019.01.09 | Ideas for Prototyp</TabTitle><Cross />
      </Tab>
      <Tab $w={480} $active $pl={27} $pr={24}>
        <Favicon $w={45}><Globe s={27.5} c="#a3a80c" /></Favicon>
        <TabTitle $w={300} $ls={-0.05}>Sentinel-hub EO-Browser</TabTitle><Cross />
      </Tab>
      <Tab $w={80} $pl={32} $pr={0}>
        <svg width="24" height="24" viewBox="0 0 24 24" stroke="#5a5e63" strokeWidth="3"><path d="M12 0V24M0 12H24" /></svg>
      </Tab>
    </TabStrip>
  );
}

function Tools() {
  const nav = { width: 32, height: 32, viewBox: '0 0 32 32', fill: 'none', stroke: 'currentColor', strokeWidth: 3 };
  return (
    <Toolbar>
      <NavIcons>
        <svg {...nav}><path d="M29 16H4M16 4 4 16 16 28" /></svg>
        <svg {...nav} stroke="#b9bbbe"><path d="M3 16H28M16 4 28 16 16 28" /></svg>
        <svg {...nav}><path d="M26.5 22A12 12 0 1 1 25.5 8.5" /><path d="M29 3V14H18z" fill="currentColor" stroke="none" /></svg>
        <svg {...nav}><path d="M3 17 16 4.5 29 17H24.5V28H7.5V17z" strokeWidth="2.8" /></svg>
      </NavIcons>
      <Omnibox>
        <FaLock size={22} color="#5f6368" />
        <Url>https://<b>apps.sentinel-hub.com</b>/eo-browser/?lat=61.6973&amp;lng=-152.4018&amp;zoom=11&amp;time...</Url>
        <svg width="30" height="30" viewBox="0 0 30 30" fill="none" stroke="#5f6368" strokeWidth="2.6"><path d="M15 2.5 18.7 11.3 28 12 20.8 18.2 23.2 27.3 15 22.4 6.8 27.3 9.2 18.2 2 12 11.3 11.3z" /></svg>
      </Omnibox>
      <Extensions>
        <Ext><ExtTile $fg="#3b3b3b" $ff={'"DejaVu Serif", serif'} $fs={30} $align="flex-start">D</ExtTile><ExtBadge $c="#16b849">1</ExtBadge></Ext>
        <Ext><ExtTile $bg="linear-gradient(100deg,#0c94f5 75%,#0664ad 76%)">S</ExtTile><ExtBadge $c="#63676b">3</ExtBadge></Ext>
        <Ext><svg width="32" height="32" viewBox="0 0 32 32"><path d="M1 1 8 4H24L31 1 29 18 24 24H8L3 18z" fill="#2b100f" /><path d="M9 17H23L21 25H11z" fill="#e9cdb9" /><path d="M5 17 11 20 10 31H4zM27 17 21 20 22 31H28z" fill="#f2d6c2" /></svg></Ext>
        <Ext><FaRocket size={31} color="#4d4f52" /></Ext>
        <Ext><Dropbox s={31} c="#0a66ff" /></Ext>
        <Ext><svg width="32" height="32" viewBox="0 0 32 32"><circle cx="9" cy="10" r="7.5" fill="#b7dcf5" stroke="#7b9db6" strokeWidth="2" /><path d="M14 16 19 20" stroke="#7b8791" strokeWidth="3" /><path d="M17 19Q23 15 26 20T31 28L24 31H12Q16 27 17 19z" fill="#60738f" /><path d="M24 23 30 28 26 31 21 27z" fill="#d9dde4" /></svg></Ext>
        <Ext><ExtTile $bg="#202328"><FaReact size={27} color="#7fd0f2" /></ExtTile></Ext>
        <Ext><svg width="32" height="32" viewBox="0 0 32 32"><rect width="32" height="32" rx="4" fill="#4ba30a" /><text x="3" y="21.5" fontSize="15" fontWeight="700" fill="#f2ffe0" fontFamily="Liberation Sans" textLength="26" lengthAdjust="spacingAndGlyphs">CORS</text></svg></Ext>
        <Ext><ExtTile $fg="#4c4c4c" $ff={'"DejaVu Serif", serif'} $fs={30}>T</ExtTile></Ext>
        <Ext><svg width="28" height="28" viewBox="0 0 28 28"><path d="M14 0 28 5Q28 20 14 28 0 20 0 5z" fill="#f26a63" /><circle cx="14" cy="13" r="6" fill="none" stroke="#fff" strokeWidth="1.8" /><path d="M10 9 18 17" stroke="#fff" strokeWidth="1.8" /></svg></Ext>
        <Ext><svg width="32" height="32" viewBox="0 0 32 32"><rect width="32" height="32" fill="#0f2c3a" /><rect x="2" y="2" width="28" height="28" fill="#3fdfe5" /><path d="M12 4H20L27 12V20L20 28H12L5 20V12z" fill="#12313f" /><path d="M14 8 22 11 23 18 18 24 10 21 9 14z" fill="#3fdfe5" /></svg></Ext>
        <Ext><svg width="22" height="32" viewBox="0 0 22 32"><rect x="1.5" y="1.5" width="19" height="29" rx="9.5" fill="#f0f0f0" stroke="#55595d" strokeWidth="2.4" /><circle cx="11" cy="21.5" r="6.6" fill="#f97a1d" /></svg></Ext>
      </Extensions>
      <ToolbarRule />
      <svg width="40" height="40" viewBox="0 0 40 40"><defs><clipPath id="av"><circle cx="20" cy="20" r="20" /></clipPath></defs><g clipPath="url(#av)"><rect width="40" height="40" fill="#5c6b4f" /><path d="M0 0H40V9H0z" fill="#a7b0a4" /><path d="M0 26 14 16H28L40 24V40H0z" fill="#3c4a34" /><circle cx="20" cy="13" r="5" fill="#c59c7e" /><path d="M15 11Q20 3 25 11z" fill="#1a1a1c" /><path d="M9 40Q9 20 20 19T31 40z" fill="#17181b" /></g></svg>
      <Dots><svg width="8" height="28" viewBox="0 0 8 28" fill="#5f6368"><circle cx="4" cy="4" r="3" /><circle cx="4" cy="14" r="3" /><circle cx="4" cy="24" r="3" /></svg></Dots>
    </Toolbar>
  );
}

function SidePanel() {
  return (
    <Panel>
      <PanelHead>
        <HeaderArt />
        <BackButton><FaChevronLeft size={25} /></BackButton>
        <Brand><Globe s={60} c="#b8b8b8" />EO Browser</Brand>
        <Power><FaPowerOff size={30} /></Power>
      </PanelHead>
      <PanelTabs>
        <PanelTab $w={191} $gap={14}><Magnifier s={33} />Search</PanelTab>
        <PanelTab $w={173}><ListIcon />Results</PanelTab>
        <PanelTab $w={200} $pl={21} $gap={11} $active><FaPaintBrush size={34} />Visualization</PanelTab>
      </PanelTabs>
      <DatasetRow>Dataset:<strong>SENTINEL-2 L1C</strong><GrayButton>Show all</GrayButton></DatasetRow>
      <DateRow>Date:
        <DateField>
          <svg width="92" height="34" viewBox="0 0 92 34" fill="#b4b4b4"><path d="M11 6V28L0 17zM78 6V28L89 17z" /><g transform="translate(29 0)"><CalendarIcon /></g></svg>
          <DateText>2017-03-12</DateText>
        </DateField>
      </DateRow>
      <LayerList>
        {layers.map(([name, desc, kind]) => (
          <LayerItem key={name} $on={kind === 'true'}>
            <Thumb $on={kind === 'true'}>{kind ? <ThumbArt kind={kind} /> : <FaPaintBrush size={27} />}</Thumb>
            <LayerText>{name}<small>{desc}</small></LayerText>
          </LayerItem>
        ))}
      </LayerList>
      <PanelFoot>Powered by <u>Sinergise</u> with contributions from the European Space Agency<br />v2.16.6</PanelFoot>
    </Panel>
  );
}

function DownloadModal() {
  return (
    <Modal>
      <ModalTabs>
        <ModalTab>Basic</ModalTab>
        <ModalTab $active>Analytical</ModalTab>
        <CloseBox><Cross s={25} w={1.9} c="#fff" /></CloseBox>
      </ModalTabs>
      <Title>Image download</Title>
      <Field $h={52}>
        <Label $lh={51}>Show logo<FaQuestionCircle size={27} /></Label>
        <div><Toggle><Knob /></Toggle></div>
      </Field>
      <Field $h={50}><Label $lh={50}>Image format:</Label><Control><Dropdown value="TIFF (8-bit)" ls={0.2} /></Control></Field>
      <Field $h={86}><Label $lh={47}>Image resolution:</Label><Control><Dropdown value="HIGH" ls={-0.1} /><Hint>4892 x 2385 px</Hint></Control></Field>
      <Field $h={86}><Label $lh={46}>Coordinate system:</Label><Control><Dropdown value="Popular Web Mercator (EPSG:3857)" /><Hint>Projected resolution: 20 m/px</Hint></Control></Field>
      <Field>
        <Label $lh={46}>Layers:</Label>
        <Columns>
          <div><ColumnTitle>Visualized</ColumnTitle>{visualized.map((l, i) => <Check key={l} label={l} on={i === 0} />)}</div>
          <div><ColumnTitle>Raw</ColumnTitle>{raw.map(l => <Check key={l} label={l} />)}</div>
        </Columns>
      </Field>
    </Modal>
  );
}

export default function App() {
  return (
    <Desktop>
      <Global />
      <Menu />
      <WindowBack>
        <Window>
          <Tabs />
          <Tools />
          <Page>
            <MapArt />
            <SidePanel />
            <SearchBox><SearchIcon><Magnifier s={31} /></SearchIcon>Go to Place</SearchBox>
            <ToolColumn>
              <Tool $c="#b0b0b0" $pb={2}><FaInfo size={32} /></Tool>
              <Tool $pb={3}><svg width="30" height="30" viewBox="0 0 30 30" fill="currentColor"><path d="M15 0 29.5 11 24 29H6L.5 11z" /></svg></Tool>
              <Tool $pb={1}><PinIcon /></Tool>
              <Tool $pt={3}><RulerIcon /></Tool>
              <Tool><ImageFileIcon /></Tool>
              <Tool $pt={2}><FilmIcon /></Tool>
            </ToolColumn>
            <LayersButton><LayersIcon /></LayersButton>
            <ZoomColumn>
              <ZoomButton><svg width="26" height="26" viewBox="0 0 26 26" fill="#dcdcdc"><path d="M10 0H16V10H26V16H16V26H10V16H0V10H10z" /></svg></ZoomButton>
              <ZoomButton><svg width="26" height="26" viewBox="0 0 26 26" fill="#dcdcdc"><path d="M0 10H26V16H0z" /></svg></ZoomButton>
            </ZoomColumn>
            <Attribution>Carto © CC BY 3.0, OpenStreetMap © ODbL</Attribution>
            <Links><u>About EO Browser</u><LinkRule /><u>Contact us</u><LinkRule /><u>Get data</u></Links>
            <Coords>Lat: 61.7318, Lng: -151.9775</Coords>
            <ScaleBar>3 km</ScaleBar>
            <PageEdge />
            <DownloadModal />
          </Page>
          <Downloads>
            <FileIcon><svg width="26" height="33" viewBox="0 0 26 33"><path d="M1 1H17L25 9V32H1z" fill="#fafafa" stroke="#c9c9c9" /><path d="M17 1V9H25z" fill="#e2e2e2" /><rect x="5" y="12" width="15" height="10" fill="#6f9cc9" transform="rotate(-4 12 17)" /><path d="M5 18Q12 14 20 18V24H5z" fill="#2f4258" /><circle cx="18" cy="22" r="3.5" fill="#8a8d90" /></svg></FileIcon>
            <FileName>2019.01.09 _ Id....pdf</FileName>
            <ChevronBox><svg width="20" height="14" viewBox="0 0 20 14" fill="none" stroke="#75787c" strokeWidth="3"><path d="M2 12 10 3 18 12" /></svg></ChevronBox>
            <BarRule />
            <ShowAll>Show All</ShowAll>
            <CloseSmall><Cross s={19} w={3} c="#6f7277" /></CloseSmall>
          </Downloads>
        </Window>
      </WindowBack>
      <DockArea>
        <Dock>
          {dock.map((d, i) => d.rule ? <DockRule key={i} $h={d.rule[0]} $t={d.rule[1]} /> : <DockItem key={i} $run={d.run}>{d.a}</DockItem>)}
        </Dock>
      </DockArea>
    </Desktop>
  );
}
